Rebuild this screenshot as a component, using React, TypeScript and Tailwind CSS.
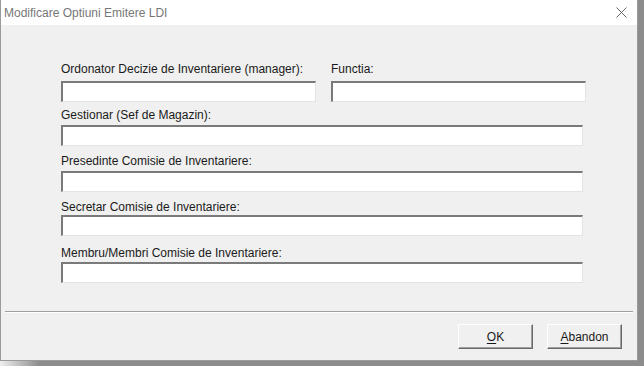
const FONT = "font-['Liberation_Sans',Arial,sans-serif]"

function Field({ className = '' }: { className?: string }) {
  return (
    <div
      className={`h-[21px] bg-white border-t-2 border-l-2 border-b border-r border-t-[#7a7a7a] border-l-[#7a7a7a] border-b-[#e3e3e3] border-r-[#e3e3e3] ${className}`}
    />
  )
}

function Label({ text, className = '' }: { text: string; className?: string }) {
  return <div className={`h-4 leading-4 text-[12px] text-[#1a1a1a] whitespace-nowrap ${className}`}>{text}</div>
}

function Button({ label, rest }: { label: string; rest: string }) {
  return (
    <button className="w-[75px] h-[25px] bg-[#f0f0f0] border border-t-white border-l-white border-r-[#696969] border-b-[#696969] shadow-[inset_-1px_-1px_0_#a0a0a0] text-[12px] text-[#1a1a1a] leading-none">
      <span className="underline underline-offset-2">{label}</span>
      {rest}
    </button>
  )
}

export default function App() {
  return (
    <div className={`w-[644px] h-[366px] bg-[#8c8c8c] flex flex-col ${FONT}`}>
      <div className="w-[638px] h-[361px] flex flex-col bg-[#f0f0f0] border-l border-r border-b border-[#9a9a9a]">
        {/* Title bar */}
        <div className="h-[25px] bg-white flex items-center justify-between pl-[3px] pr-[10px] shrink-0">
          <span className="text-[12px] text-[#777777]">Modificare Optiuni Emitere LDI</span>
          <svg width="11" height="11" viewBox="0 0 11 11" aria-hidden="true">
            <path d="M0.5 0.5 L10.5 10.5 M10.5 0.5 L0.5 10.5" stroke="#666" strokeWidth="1" fill="none" />
          </svg>
        </div>

        {/* Fields */}
        <div className="pl-[60px] pt-[36px] flex flex-col">
          <div className="flex gap-[15px]">
            <div className="w-[255px] flex flex-col">
              <Label text="Ordonator Decizie de Inventariere (manager):" />
              <Field className="mt-1" />
            </div>
            <div className="w-[255px] flex flex-col">
              <Label text="Functia:" />
              <Field className="mt-1" />
            </div>
          </div>

          <Label text="Gestionar (Sef de Magazin):" className="mt-[5px]" />
          <Field className="mt-[2px] w-[522px]" />

          <Label text="Presedinte Comisie de Inventariere:" className="mt-[7px]" />
          <Field className="mt-[2px] w-[522px]" />

          <Label text="Secretar Comisie de Inventariere:" className="mt-[7px]" />
          <Field className="w-[522px]" />

          <Label text="Membru/Membri Comisie de Inventariere:" className="mt-[9px]" />
          <Field className="mt-[1px] w-[522px]" />
        </div>

        {/* Separator */}
        <div className="mt-[28px] mx-[4px] border-t border-b border-t-[#a0a0a0] border-b-white" />

        {/* Buttons */}
        <div className="mt-[11px] flex justify-end gap-[14px] pr-[15px]">
          <Button label="O" rest="K" />
          <Button label="A" rest="bandon" />
        </div>
      </div>
      <div className="h-[5px] w-[40px] bg-linear-to-r from-[#f0f0f0] to-[#8c8c8c]" />
    </div>
  )
}
